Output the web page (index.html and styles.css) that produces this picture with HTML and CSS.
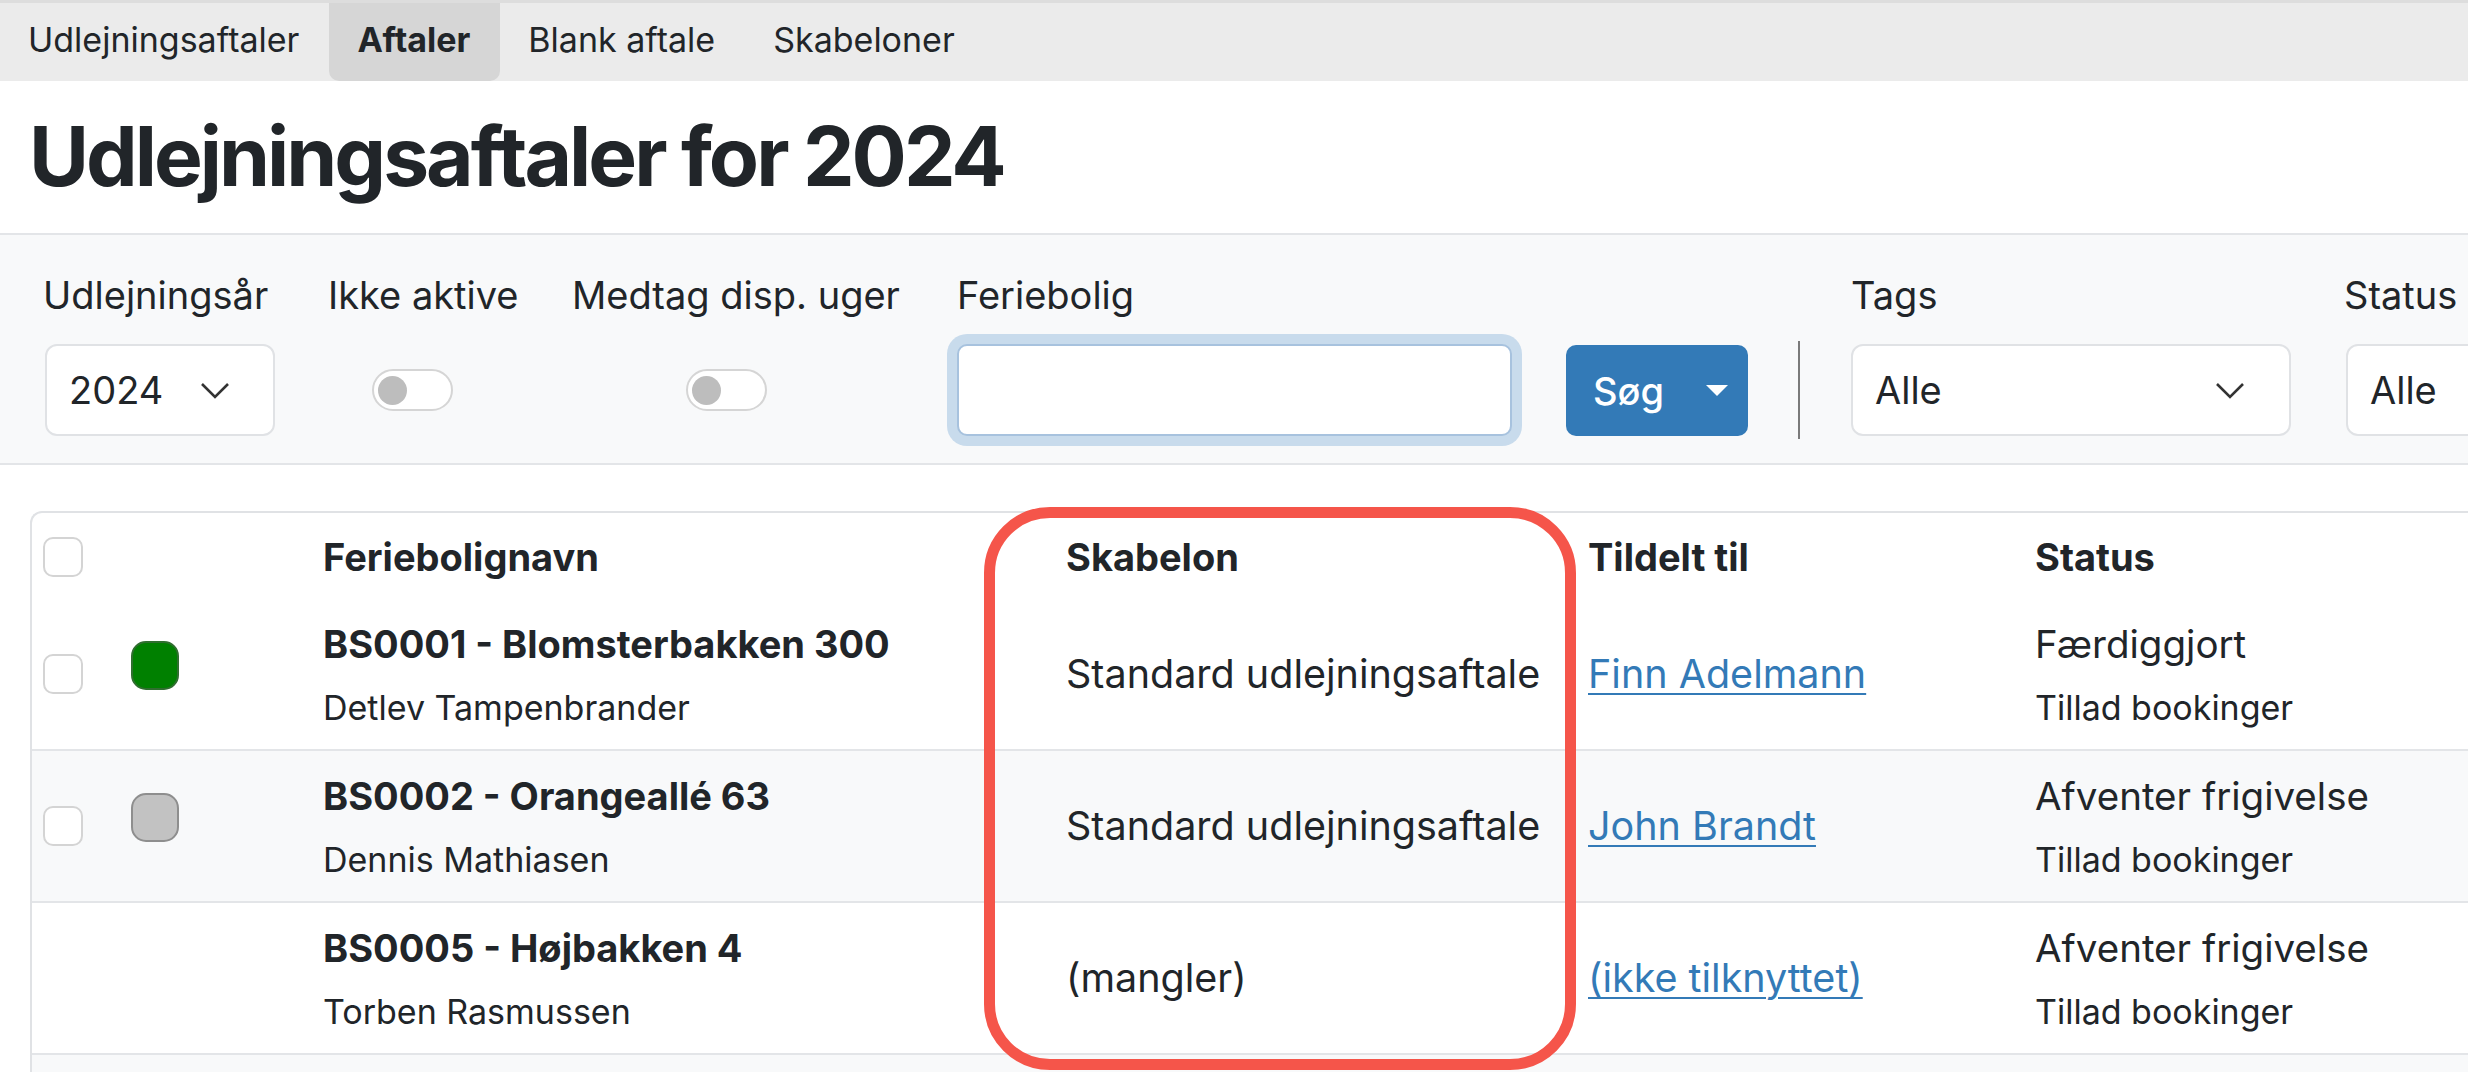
FILE: index.html
```html
<!DOCTYPE html>
<html lang="da">
<head>
<meta charset="utf-8">
<title>Udlejningsaftaler for 2024</title>
<link rel="stylesheet" href="styles.css">
</head>
<body>
<nav class="topnav">
  <a class="tab">Udlejningsaftaler</a>
  <a class="tab active">Aftaler</a>
  <a class="tab">Blank aftale</a>
  <a class="tab">Skabeloner</a>
</nav>

<header class="title-bar">
  <h1 class="title">Udlejningsaftaler for 2024</h1>
</header>

<section class="filters">
  <div class="field field-year">
    <span class="label">Udlejningsår</span>
    <div class="select select-year"><span>2024</span>
      <svg class="chev" viewBox="0 0 30 17"><path d="M2 2 L15 15 L28 2" fill="none" stroke="#333" stroke-width="2.6"/></svg>
    </div>
  </div>
  <div class="field field-inactive">
    <span class="label">Ikke aktive</span>
    <div class="switch-row"><span class="switch sw1"><span class="knob"></span></span></div>
  </div>
  <div class="field field-disp">
    <span class="label">Medtag disp. uger</span>
    <div class="switch-row"><span class="switch sw2"><span class="knob"></span></span></div>
  </div>
  <div class="field field-house">
    <span class="label">Feriebolig</span>
    <div class="text-input"></div>
  </div>
  <button class="btn-search"><span>Søg</span><span class="caret"></span></button>
  <span class="divider"></span>
  <div class="field field-tags">
    <span class="label">Tags</span>
    <div class="select select-tags"><span>Alle</span>
      <svg class="chev" viewBox="0 0 30 17"><path d="M2 2 L15 15 L28 2" fill="none" stroke="#333" stroke-width="2.6"/></svg>
    </div>
  </div>
  <div class="field field-status">
    <span class="label">Status</span>
    <div class="select select-status"><span>Alle</span></div>
  </div>
</section>

<section class="table-wrap">
  <div class="table">
    <div class="row head">
      <div class="cell c-check"><span class="checkbox"></span></div>
      <div class="cell c-dot"></div>
      <div class="cell c-name"><b>Feriebolignavn</b></div>
      <div class="cell c-tpl"><b>Skabelon</b></div>
      <div class="cell c-user"><b>Tildelt til</b></div>
      <div class="cell c-status"><b>Status</b></div>
    </div>
    <div class="row">
      <div class="cell c-check"><span class="checkbox"></span></div>
      <div class="cell c-dot"><span class="dot green"></span></div>
      <div class="cell c-name"><span class="main bold">BS0001 - Blomsterbakken 300</span><span class="sub">Detlev Tampenbrander</span></div>
      <div class="cell c-tpl"><span class="main">Standard udlejningsaftale</span></div>
      <div class="cell c-user"><a class="link">Finn Adelmann</a></div>
      <div class="cell c-status"><span class="main">Færdiggjort</span><span class="sub">Tillad bookinger</span></div>
    </div>
    <div class="row striped">
      <div class="cell c-check"><span class="checkbox"></span></div>
      <div class="cell c-dot"><span class="dot gray"></span></div>
      <div class="cell c-name"><span class="main bold">BS0002 - Orangeallé 63</span><span class="sub">Dennis Mathiasen</span></div>
      <div class="cell c-tpl"><span class="main">Standard udlejningsaftale</span></div>
      <div class="cell c-user"><a class="link">John Brandt</a></div>
      <div class="cell c-status"><span class="main">Afventer frigivelse</span><span class="sub">Tillad bookinger</span></div>
    </div>
    <div class="row">
      <div class="cell c-check"></div>
      <div class="cell c-dot"></div>
      <div class="cell c-name"><span class="main bold">BS0005 - Højbakken 4</span><span class="sub">Torben Rasmussen</span></div>
      <div class="cell c-tpl"><span class="main">(mangler)</span></div>
      <div class="cell c-user"><a class="link">(ikke tilknyttet)</a></div>
      <div class="cell c-status"><span class="main">Afventer frigivelse</span><span class="sub">Tillad bookinger</span></div>
    </div>
    <div class="row striped empty"></div>
    <div class="highlight"></div>
  </div>
</section>
</body>
</html>
```

FILE: styles.css
```css
* { box-sizing: border-box; }
html, body { margin: 0; padding: 0; }
body {
  font-family: "Inter", "Noto Sans", sans-serif;
  color: #212529;
  background: #fff;
  overflow: hidden;
  height: 1072px;
}

/* top navigation */
.topnav {
  display: flex;
  height: 81px;
  background: #ebebeb;
  border-top: 3px solid #dddddd;
}
.tab {
  display: block;
  padding: 0 30px 4px 28px;
  font-size: 34px;
  line-height: 74px;
  color: #212529;
}
.tab.active {
  background: #d6d6d6;
  font-weight: 700;
  border-radius: 0 0 10px 10px;
}

/* title */
.title-bar {
  height: 154px;
  border-bottom: 2px solid #e3e5e8;
  padding: 24px 0 0 29px;
}
.title {
  margin: 0;
  font-size: 82px;
  line-height: 103px;
  font-weight: 700;
  letter-spacing: -3px;
}

/* filters */
.filters {
  height: 230px;
  background: #f8f9fa;
  border-bottom: 2px solid #e3e5e8;
  display: flex;
  align-items: flex-end;
  gap: 53px;
  padding: 0 0 27px 43px;
}
.filters > * { flex-shrink: 0; }
.field { display: flex; flex-direction: column; }
.label {
  font-size: 38px;
  line-height: 48px;
  margin-bottom: 25px;
  white-space: nowrap;
}
.select {
  height: 92px;
  background: #fff;
  border: 2px solid #e0e2e5;
  border-radius: 12px;
  display: flex;
  align-items: center;
  font-size: 38px;
  padding: 0 22px;
  justify-content: space-between;
}
.select-year { width: 230px; margin-left: 2px; }
.select-tags { width: 440px; }
.select-status { width: 200px; margin-left: 2px; }
.chev { width: 30px; height: 17px; }
.select-year .chev { margin-right: 21px; }
.select-tags .chev { margin-right: 22px; }

.switch-row { height: 92px; display: flex; align-items: center; }
.field-inactive { width: 191px; }
.field-disp { width: 332px; }
.sw1 { margin-left: 44px; }
.sw2 { margin-left: 114px; }
.switch {
  width: 81px;
  height: 42px;
  border: 2px solid #d5d5d5;
  border-radius: 21px;
  background: #fff;
  display: flex;
  align-items: center;
  padding-left: 4px;
}
.knob {
  width: 29px;
  height: 29px;
  border-radius: 50%;
  background: #bdbdbd;
}

.field-house { width: 555px; }
.text-input {
  height: 92px;
  background: #fff;
  border: 2px solid #a7c2de;
  border-radius: 10px;
  box-shadow: 0 0 0 10px #c8dbec;
}

.btn-search {
  width: 182px;
  height: 91px;
  margin-left: 1px;
  background: #337ab7;
  color: #fff;
  border: 0;
  border-radius: 10px;
  font-family: inherit;
  font-size: 38px;
  font-weight: 500;
  display: flex;
  align-items: center;
  padding: 0 0 0 27px;
}
.caret {
  width: 0; height: 0;
  margin-left: 42px;
  border-left: 11px solid transparent;
  border-right: 11px solid transparent;
  border-top: 11px solid #fff;
}
.divider {
  width: 2px;
  height: 98px;
  background: #7a7a7a;
  margin: 0 -2px -3px -3px;
}

/* table */
.table-wrap {
  padding: 46px 0 0 30px;
}
.table {
  position: relative;
  border-top: 2px solid #e0e2e5;
  border-left: 2px solid #e0e2e5;
  border-top-left-radius: 12px;
}
.row {
  display: grid;
  grid-template-columns: 86px 192px 743px 522px 447px 1fr;
  height: 152px;
  border-bottom: 2px solid #e3e5e8;
  align-items: center;
}
.row.head { height: 86px; border-bottom: 0; }
.row.striped { background: #f8f9fa; }
.row.empty { border-bottom: 0; }
.cell {
  padding-left: 13px;
  display: flex;
  flex-direction: column;
  font-size: 38.5px;
  white-space: nowrap;
}
.head .cell { padding-top: 2px; font-size: 38px; }
.head b { font-weight: 700; }
.c-check { padding-left: 11px; }
.checkbox {
  display: block;
  width: 40px;
  height: 40px;
  border: 2px solid #d4d4d4;
  border-radius: 10px;
  background: #fff;
}
.dot {
  display: block;
  width: 48px;
  height: 49px;
  border-radius: 15px;
  margin-top: -18px;
}
.dot.green { background: #008000; border: 2px solid #2f6e2f; }
.dot.gray { background: #c2c2c2; border: 2px solid #8e8e8e; }
.main { line-height: 48px; }
.c-tpl .main { font-size: 39.5px; }
.bold { font-weight: 700; font-size: 38px; }
.sub {
  font-size: 34px;
  line-height: 42px;
  margin-top: 19px;
}
.link {
  color: #337ab7;
  font-size: 39.5px;
  text-decoration: underline;
  text-decoration-thickness: 2px;
  text-underline-offset: 5px;
  line-height: 48px;
}

/* annotation overlay */
.highlight {
  position: absolute;
  left: 952px;
  top: -6px;
  width: 592px;
  height: 563px;
  border: 11px solid #f5554a;
  border-radius: 66px;
  pointer-events: none;
}
```
